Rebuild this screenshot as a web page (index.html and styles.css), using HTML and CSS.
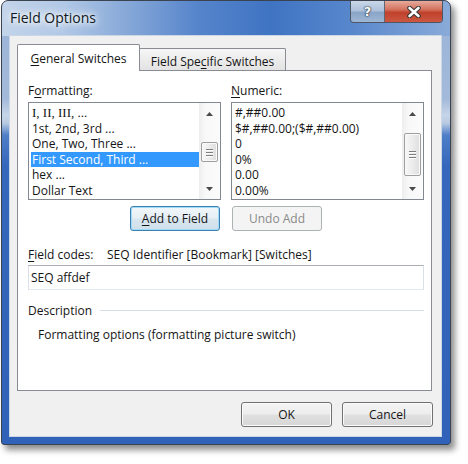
FILE: index.html
```html
<!DOCTYPE html>
<html>
<head>
<meta charset="utf-8">
<title>Field Options</title>
<link rel="stylesheet" href="styles.css">
</head>
<body>
<div class="window">
  <div class="titlebar">
    <div class="title">Field Options</div>
    <div class="caption">
      <div class="cap help"><span>?</span></div>
      <div class="cap close">
        <svg width="14" height="12" viewBox="0 0 14 12">
          <path d="M2.5 2 L11.5 10 M11.5 2 L2.5 10" stroke="#343434" stroke-width="4.6" stroke-linecap="round" fill="none"/>
          <path d="M2.5 2 L11.5 10 M11.5 2 L2.5 10" stroke="#ffffff" stroke-width="2.6" stroke-linecap="round" fill="none"/>
        </svg>
      </div>
    </div>
  </div>
  <div class="client">
    <div class="tabs">
      <div class="tab active"><u>G</u>eneral Switches</div>
      <div class="tab inactive">Field Spe<u>c</u>ific Switches</div>
    </div>
    <div class="panel">
      <div class="cols">
        <div class="col">
          <div class="label">F<u>o</u>rmatting:</div>
          <div class="listbox">
            <div class="items">
              <div class="item serif">I, II, III, ...</div>
              <div class="item">1st, 2nd, 3rd ...</div>
              <div class="item">One, Two, Three ...</div>
              <div class="item sel">First Second, Third ...</div>
              <div class="item">hex ...</div>
              <div class="item">Dollar Text</div>
            </div>
            <div class="sb">
              <div class="sb-btn"><svg width="7" height="4" viewBox="0 0 7 4"><path d="M0 4 L3.5 0 L7 4 Z" fill="#4a4a4a"/></svg></div>
              <div class="sb-track"><div class="thumb thumb-a"><i></i><i></i><i></i></div></div>
              <div class="sb-btn"><svg width="7" height="4" viewBox="0 0 7 4"><path d="M0 0 L3.5 4 L7 0 Z" fill="#4a4a4a"/></svg></div>
            </div>
          </div>
          <div class="btn-row end"><div class="btn default"><span><u>A</u>dd to Field</span></div></div>
        </div>
        <div class="col">
          <div class="label"><u>N</u>umeric:</div>
          <div class="listbox">
            <div class="items">
              <div class="item">#,##0.00</div>
              <div class="item">$#,##0.00;($#,##0.00)</div>
              <div class="item">0</div>
              <div class="item">0%</div>
              <div class="item">0.00</div>
              <div class="item">0.00%</div>
            </div>
            <div class="sb">
              <div class="sb-btn"><svg width="7" height="4" viewBox="0 0 7 4"><path d="M0 4 L3.5 0 L7 4 Z" fill="#4a4a4a"/></svg></div>
              <div class="sb-track"><div class="thumb thumb-b"><i></i><i></i><i></i></div></div>
              <div class="sb-btn"><svg width="7" height="4" viewBox="0 0 7 4"><path d="M0 0 L3.5 4 L7 0 Z" fill="#4a4a4a"/></svg></div>
            </div>
          </div>
          <div class="btn-row start"><div class="btn disabled"><span>Undo Add</span></div></div>
        </div>
      </div>
      <div class="codes">
        <span class="codes-label"><u>F</u>ield codes:</span>
        <span>SEQ Identifier [Bookmark] [Switches]</span>
      </div>
      <div class="input">SEQ affdef</div>
      <div class="desc-head">
        <span>Description</span>
        <div class="rule"></div>
      </div>
      <div class="desc">Formatting options (formatting picture switch)</div>
    </div>
    <div class="footer">
      <div class="btn"><span>OK</span></div>
      <div class="btn"><span>Cancel</span></div>
    </div>
  </div>
</div>
</body>
</html>
```

FILE: styles.css
```css
* { box-sizing: border-box; }
html, body { margin: 0; padding: 0; background: #ffffff; }
body {
  width: 468px;
  height: 464px;
  overflow: hidden;
  font-family: "Open Sans", "Noto Sans", sans-serif;
  font-size: 12px;
  line-height: 15px;
  color: #151515;
}
u { text-decoration: underline; text-underline-offset: 2px; }

.window {
  margin-left: 1px;
  width: 450px;
  height: 445px;
  border: 1px solid #3c4350;
  border-radius: 7px 7px 3px 3px;
  padding: 0 8px 7px 7px;
  display: flex;
  flex-direction: column;
  background:
    linear-gradient(to right, #c3d4ea 0%, #b1c8e6 14%, #86a8d8 28%, #5584cb 44%, #3f74c3 60%, #5887cc 78%, #8aabd9 100%) top left / 100% 35px no-repeat,
    linear-gradient(to bottom, #9db5d8 35px, #a3bada 98px, #c6d5e8 114px, #b9cbe3 122px, #4f7fc8 134px, #3567bc 165px, #2f62b8 100%);
  box-shadow: 4px 5px 6px rgba(0,0,0,0.45);
}

.titlebar {
  height: 34px;
  flex: none;
  display: flex;
  justify-content: space-between;
  align-items: flex-start;
  padding-left: 1px;
  margin-right: -1px;
}
.title {
  margin-top: 8px;
  font-size: 14px;
  line-height: 18px;
  color: #101820;
  text-shadow: 0 0 12px #ffffff, 0 0 8px #ffffff, 0 0 4px #ffffff;
}
.caption {
  display: flex;
  height: 22px;
  border: 1px solid #4d5665;
  border-top: none;
  border-radius: 0 0 4px 4px;
  overflow: hidden;
}
.cap {
  height: 21px;
  display: flex;
  align-items: center;
  justify-content: center;
}
.help {
  width: 34px;
  border-right: 1px solid #5c6675;
  background: linear-gradient(to bottom, #c9d7e8 0%, #aec2dc 45%, #8aa5c8 55%, #9fb7d6 100%);
}
.help span {
  font-family: "DejaVu Sans", sans-serif;
  font-weight: bold;
  font-size: 13px;
  line-height: 13px;
  color: #ffffff;
  text-shadow: 0 0 1px #2c3a4c, 0 0 2px #2c3a4c, 0 0 1px #2c3a4c;
}
.close {
  width: 57px;
  background: linear-gradient(to bottom, #e6aa9c 0%, #d4735f 40%, #c0412c 55%, #cc5842 100%);
}

.client {
  flex: 1;
  background: #f0f0f0;
  border: 1px solid #cbd7e5;
  display: flex;
  flex-direction: column;
  padding: 8px 8px 0 7px;
}

.tabs {
  display: flex;
  align-items: flex-end;
  height: 26px;
  flex: none;
}
.tab {
  border: 1px solid #898c95;
  border-bottom: none;
  border-radius: 2px 2px 0 0;
  text-align: center;
  white-space: nowrap;
}
.tab.active {
  width: 123px;
  height: 27px;
  margin-bottom: -1px;
  padding-top: 6px;
  background: #ffffff;
  z-index: 2;
}
.tab.inactive {
  width: 147px;
  height: 22px;
  margin-left: -1px;
  padding-top: 6px;
  line-height: 14px;
  background: linear-gradient(to bottom, #f6f6f6 0%, #ececec 50%, #e3e3e3 100%);
  z-index: 1;
}

.panel {
  height: 321px;
  flex: none;
  margin-right: 1px;
  background: #ffffff;
  border: 1px solid #898c95;
  padding: 12px 7px 0 10px;
  display: flex;
  flex-direction: column;
}
.cols {
  display: grid;
  grid-template-columns: 193px 193px;
  column-gap: 10px;
}
.label { margin-bottom: 4px; }

.listbox {
  height: 98px;
  border: 1px solid #828790;
  display: flex;
  background: #ffffff;
}
.items {
  flex: 1;
  padding: 2px 0 0 2px;
  overflow: hidden;
}
.item {
  height: 15.5px;
  line-height: 15.5px;
  padding-left: 1px;
  white-space: nowrap;
}
.item.serif { font-family: "Liberation Serif", serif; font-size: 13px; }
.item.sel { background: #3399ff; color: #ffffff; }

.sb {
  width: 21px;
  display: flex;
  flex-direction: column;
  background: linear-gradient(to right, #eeeeee 0%, #f8f8f8 30%, #fbfbfb 100%);
}
.sb-btn {
  height: 21px;
  flex: none;
  display: flex;
  align-items: center;
  justify-content: center;
}
.sb-track { flex: 1; }
.thumb {
  margin: 0 2px;
  border: 1px solid #9e9e9e;
  border-radius: 2px;
  background: linear-gradient(to right, #f7f7f7 0%, #ececec 50%, #dedede 100%);
  box-shadow: inset 0 0 0 1px #fafafa;
  display: flex;
  flex-direction: column;
  align-items: center;
  justify-content: center;
  gap: 2px;
}
.thumb i {
  display: block;
  width: 7px;
  height: 1px;
  background: #7d7d7d;
  box-shadow: 0 1px 0 #ffffff;
}
.thumb-a { margin-top: 18px; height: 20px; }
.thumb-b { margin-top: 9px; height: 43px; }

.btn-row { display: flex; margin-top: 6px; }
.btn-row.end { justify-content: flex-end; padding-right: 1px; }
.btn-row.start { justify-content: flex-start; padding-left: 1px; }

.btn {
  width: 90px;
  height: 25px;
  border: 1px solid #707070;
  border-radius: 3px;
  background: linear-gradient(to bottom, #f4f4f4 0%, #ededed 48%, #e0e0e0 52%, #d6d6d6 100%);
  box-shadow: inset 0 0 0 1px #fbfbfb;
  display: flex;
  align-items: center;
  justify-content: center;
  color: #151515;
}
.btn.default {
  border-color: #3c7fb1;
  box-shadow: inset 0 0 0 1px #9fdcf7;
  background: linear-gradient(to bottom, #f2f7fa 0%, #e6eff5 48%, #d8e6ef 52%, #cfdfea 100%);
}
.btn.disabled {
  border-color: #adb2b5;
  background: #f4f4f4;
  box-shadow: none;
  color: #8a8a8a;
}

.codes {
  margin-top: 16px;
  display: flex;
  white-space: nowrap;
}
.codes-label { width: 79px; }

.input {
  margin-top: 3px;
  height: 25px;
  border: 1px solid #e3e9ef;
  border-top-color: #abadb3;
  border-left-color: #dbdfe6;
  border-right-color: #dbdfe6;
  padding: 0 0 1px 2px;
  display: flex;
  align-items: center;
  background: #ffffff;
}

.desc-head {
  margin-top: 13px;
  display: flex;
  align-items: center;
  gap: 8px;
}
.rule {
  flex: 1;
  height: 1px;
  background: #d5dfe5;
}
.desc {
  margin-top: 9px;
  padding-left: 10px;
}

.footer {
  margin-top: 11px;
  display: flex;
  justify-content: flex-end;
  gap: 10px;
}
.footer .btn { width: 91px; }
```
